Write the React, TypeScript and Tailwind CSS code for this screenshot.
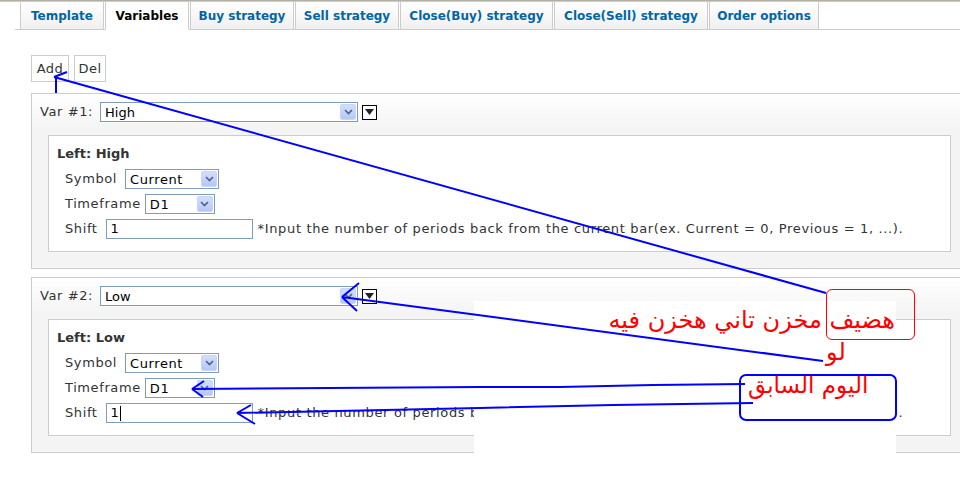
import React from 'react';

const tabs = [
  { label: 'Template', w: 'w-[84px]' },
  { label: 'Variables', w: 'w-[84px]', active: true },
  { label: 'Buy strategy', w: 'w-[104px]' },
  { label: 'Sell strategy', w: 'w-[104px]' },
  { label: 'Close(Buy) strategy', w: 'w-[153px]' },
  { label: 'Close(Sell) strategy', w: 'w-[154px]' },
  { label: 'Order options', w: 'w-[110px]' },
];

const Chevron = () => (
  <svg width="9" height="6" viewBox="0 0 9 6">
    <path d="M1 1 L4.5 4.5 L8 1" fill="none" stroke="#4d6185" strokeWidth="1.6" />
  </svg>
);

const Select = ({ value, w }: { value: string; w: string }) => (
  <div className={`flex h-5 items-center border border-[#7f9db9] bg-white ${w}`}>
    <span className="flex-1 pl-[4px] text-[13px] leading-none text-black">{value}</span>
    <span className="mr-px flex h-4 w-4 items-center justify-center rounded-[2px] border border-[#c6d6fb] bg-[linear-gradient(#d3defd,#b4c8f6)]">
      <Chevron />
    </span>
  </div>
);

const VarPanel = ({ n, name, cursor }: { n: number; name: string; cursor?: boolean }) => (
  <div className="w-[937px] border border-[#cccccc] bg-[linear-gradient(#ffffff,#f4f4f4_36px)] pt-[8px] pb-[16px] px-[16px]">
    <div className="flex h-5 items-center -ml-[8px]">
      <span className="w-[60px] text-[13px] tracking-[0.6px] text-[#333]">Var #{n}:</span>
      <Select value={name} w="w-[258px]" />
      <span className="ml-[4px] flex h-[15px] w-[15px] items-center justify-center border border-black bg-white">
        <svg width="9" height="6" viewBox="0 0 9 6"><path d="M0 0 H9 L4.5 6 Z" fill="#222" /></svg>
      </span>
    </div>
    <div className="mt-[13px] border border-[#cccccc] bg-white pt-[9px] pb-[12px] pl-[8px]">
      <div className="text-[13px] font-bold leading-[18px] text-[#333]">Left: {name}</div>
      <div className="mt-[6px] flex flex-col gap-[5px] pl-[8px] text-[13px] tracking-[0.6px] text-[#333]">
        <div className="flex h-5 items-center gap-[8px]">
          <span>Symbol</span>
          <Select value="Current" w="w-[94px]" />
        </div>
        <div className="flex h-5 items-center gap-[4px]">
          <span>Timeframe</span>
          <Select value="D1" w="w-[70px]" />
        </div>
        <div className="flex h-5 items-center gap-[8px]">
          <span>Shift</span>
          <div className="flex h-5 w-[147px] items-center border border-[#7f9db9] bg-white pl-[4px] text-black">
            1{cursor && <span className="ml-px h-[15px] w-px bg-black" />}
          </div>
          <span className="-ml-[3px] whitespace-nowrap tracking-[0.65px]">
            *Input the number of periods back from the current bar(ex. Current = 0, Previous = 1, ...).
          </span>
        </div>
      </div>
    </div>
  </div>
);

export default function App() {
  return (
    <div className="relative h-[483px] w-[960px] overflow-hidden bg-white font-['DejaVu_Sans',sans-serif]">
      <div className="h-[2px] bg-[linear-gradient(#a9a393,#d8d4ca)]" />
      <div className="ml-[15px] flex h-[28px] items-end gap-px border-b border-[#cccccc] pl-[5px]">
        {tabs.map((t) => (
          <div
            key={t.label}
            className={`flex h-[28px] items-center justify-center border border-[#cccccc] text-[12px] font-bold ${t.w} ${
              t.active
                ? '-mb-px h-[29px] border-b-white bg-white text-black'
                : 'border-b-0 bg-[linear-gradient(#ffffff,#f0f0f0)] text-[#0066a4]'
            }`}
          >
            {t.label}
          </div>
        ))}
      </div>

      <div className="ml-[31px] mt-[25px] flex gap-[5px] text-[13px] tracking-[0.5px] text-[#333]">
        <button className="h-[27px] w-[38px] border border-[#cccccc] bg-white">Add</button>
        <button className="h-[27px] w-[32px] border border-[#cccccc] bg-white">Del</button>
      </div>

      <div className="ml-[31px] mt-[11px] flex flex-col gap-[8px]">
        <VarPanel n={1} name="High" />
        <VarPanel n={2} name="Low" cursor />
      </div>

      {/* annotation layer pasted over the screenshot */}
      <div className="absolute left-[474px] top-[301px] h-[154px] w-[422px] bg-white" />
      <div className="absolute left-[826px] top-[289px] h-[51px] w-[89px] rounded-[6px] border border-[#ff0000]" />
      <div className="absolute left-[739px] top-[374px] h-[47px] w-[158px] rounded-[7px] border-2 border-[#0000ff]" />
      <div dir="rtl" className="absolute right-[65px] top-[303px] whitespace-nowrap text-[24px] leading-[34px] text-[#ff0000]">
        هضيف مخزن تاني هخزن فيه
      </div>
      <div dir="rtl" className="absolute left-[826px] top-[335px] text-[24px] leading-[34px] text-[#ff0000]">
        لو
      </div>
      <div dir="rtl" className="absolute left-[748px] top-[369px] whitespace-nowrap text-[23px] leading-[32px] text-[#ff0000]">
        اليوم السابق
      </div>
      <svg className="pointer-events-none absolute inset-0" width="960" height="483">
        <g fill="none" stroke="#0000ff" strokeWidth="2">
          <path d="M54 77 L826 293 M54 77 L67 72 M56 77 L56 93" />
          <path d="M342 297 L823 361 M342 297 L359 283 M342 297 L357 311" />
          <path d="M192 389 L480 387 L560 387 L653 385 L745 384 M192 389 L204 381 M192 389 L203 397" />
          <path d="M237 413 L480 408 L613 405 L753 403 M237 413 L251 405 M237 413 L255 424" />
        </g>
      </svg>
    </div>
  );
}
